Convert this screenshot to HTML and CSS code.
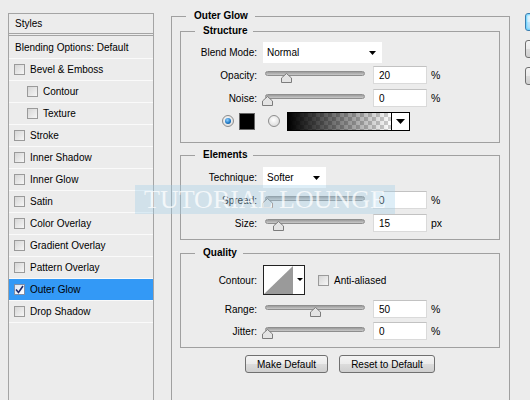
FILE: index.html
```html
<!DOCTYPE html>
<html>
<head>
  <title>Layer Style - Outer Glow</title>
  <link rel="stylesheet" href="styles.css">
</head>
<body>
  <div class="dialog">
    <!-- left: list of layer styles -->
    <div class="styles-list">
      <div class="list-head">Styles</div>
      <div class="list-row plain">Blending Options: Default</div>
      <div class="list-row"><span class="check"></span>Bevel &amp; Emboss</div>
      <div class="list-row sub"><span class="check"></span>Contour</div>
      <div class="list-row sub"><span class="check"></span>Texture</div>
      <div class="list-row"><span class="check"></span>Stroke</div>
      <div class="list-row"><span class="check"></span>Inner Shadow</div>
      <div class="list-row"><span class="check"></span>Inner Glow</div>
      <div class="list-row"><span class="check"></span>Satin</div>
      <div class="list-row"><span class="check"></span>Color Overlay</div>
      <div class="list-row"><span class="check"></span>Gradient Overlay</div>
      <div class="list-row"><span class="check"></span>Pattern Overlay</div>
      <div class="list-row selected">
        <span class="check">
          <svg width="9" height="9" viewBox="0 0 9 9"><path d="M1 4.5 L3.5 7.5 L8 1" fill="none" stroke="#1d2a6b" stroke-width="1.6"/></svg>
        </span>Outer Glow
      </div>
      <div class="list-row"><span class="check"></span>Drop Shadow</div>
    </div>

    <!-- middle: outer glow settings -->
    <fieldset class="group outer">
      <legend>Outer Glow</legend>

      <fieldset class="group inner structure">
        <legend>Structure</legend>
        <div class="row">
          <span class="lbl">Blend Mode:</span>
          <div class="select blend">Normal
            <svg class="arrow" width="7" height="4" viewBox="0 0 7 4"><path d="M0 0 H7 L3.5 4 Z"/></svg>
          </div>
        </div>
        <div class="row">
          <span class="lbl">Opacity:</span>
          <div class="slider"><div class="track"></div>
            <svg class="thumb" style="left:18px" width="11" height="10" viewBox="0 0 11 10"><path d="M5.5 0.5 L10.5 5 V9.5 H0.5 V5 Z"/></svg>
          </div>
          <div class="num">20</div><span class="unit">%</span>
        </div>
        <div class="row">
          <span class="lbl">Noise:</span>
          <div class="slider"><div class="track"></div>
            <svg class="thumb" style="left:-1px" width="11" height="10" viewBox="0 0 11 10"><path d="M5.5 0.5 L10.5 5 V9.5 H0.5 V5 Z"/></svg>
          </div>
          <div class="num">0</div><span class="unit">%</span>
        </div>
        <div class="row colors">
          <span class="radio on"></span>
          <span class="swatch"></span>
          <span class="radio"></span>
          <div class="gradient">
            <span class="ramp"></span>
            <span class="drop">
              <svg width="9" height="5" viewBox="0 0 9 5"><path d="M0 0 H9 L4.5 5 Z"/></svg>
            </span>
          </div>
        </div>
      </fieldset>

      <fieldset class="group inner elements">
        <legend>Elements</legend>
        <div class="row">
          <span class="lbl">Technique:</span>
          <div class="select technique">Softer
            <svg class="arrow" width="7" height="4" viewBox="0 0 7 4"><path d="M0 0 H7 L3.5 4 Z"/></svg>
          </div>
        </div>
        <div class="row">
          <span class="lbl">Spread:</span>
          <div class="slider"><div class="track"></div>
            <svg class="thumb" style="left:-1px" width="11" height="10" viewBox="0 0 11 10"><path d="M5.5 0.5 L10.5 5 V9.5 H0.5 V5 Z"/></svg>
          </div>
          <div class="num">0</div><span class="unit">%</span>
        </div>
        <div class="row">
          <span class="lbl">Size:</span>
          <div class="slider"><div class="track"></div>
            <svg class="thumb" style="left:10px" width="11" height="10" viewBox="0 0 11 10"><path d="M5.5 0.5 L10.5 5 V9.5 H0.5 V5 Z"/></svg>
          </div>
          <div class="num">15</div><span class="unit">px</span>
        </div>
      </fieldset>

      <fieldset class="group inner quality">
        <legend>Quality</legend>
        <div class="row contour-row">
          <span class="lbl">Contour:</span>
          <div class="contour">
            <svg width="42" height="30" viewBox="0 0 42 30">
              <path d="M1 29 L30 1 V29 Z" fill="#9a9a9a"/>
              <path d="M34 13 H40 L37 16 Z" fill="#000"/>
            </svg>
          </div>
          <span class="check aa"></span><span>Anti-aliased</span>
        </div>
        <div class="row range-row">
          <span class="lbl">Range:</span>
          <div class="slider"><div class="track"></div>
            <svg class="thumb" style="left:47px" width="11" height="10" viewBox="0 0 11 10"><path d="M5.5 0.5 L10.5 5 V9.5 H0.5 V5 Z"/></svg>
          </div>
          <div class="num">50</div><span class="unit">%</span>
        </div>
        <div class="row">
          <span class="lbl">Jitter:</span>
          <div class="slider"><div class="track"></div>
            <svg class="thumb" style="left:-1px" width="11" height="10" viewBox="0 0 11 10"><path d="M5.5 0.5 L10.5 5 V9.5 H0.5 V5 Z"/></svg>
          </div>
          <div class="num">0</div><span class="unit">%</span>
        </div>
      </fieldset>

      <div class="actions">
        <button class="btn make">Make Default</button>
        <button class="btn reset">Reset to Default</button>
      </div>
    </fieldset>

    <!-- right: dialog buttons, only their left edge is inside the window -->
    <div class="side-buttons">
      <button class="btn side focus" aria-label="OK"></button>
      <button class="btn side" aria-label="Cancel"></button>
      <button class="btn side" aria-label="New Style"></button>
    </div>
  </div>

  <div class="watermark">TUTORIAL LOUNGE</div>
</body>
</html>
```

FILE: styles.css
```css
body { margin: 0; height: 400px; overflow: hidden; background: #ececec; font-family: "Liberation Sans", Arial, sans-serif; font-size: 10px; color: #000; position: relative; }
.dialog { display: flex; align-items: flex-start; padding-left: 8px; }
.dialog > * { flex-shrink: 0; }

/* styles list */
.styles-list { width: 146px; height: 400px; margin-top: 13px; box-sizing: border-box; border: 1px solid #a4a4a4; border-bottom: none; }
.list-head { height: 19px; line-height: 20px; padding-left: 6px; border-bottom: 3px double #a4a4a4; }
.list-row { display: flex; align-items: center; height: 21px; padding-left: 5px; border-bottom: 1px solid #fafafa; white-space: nowrap; }
.list-row.plain { height: 22px; padding-left: 6px; }
.list-row.sub { padding-left: 18px; }
.list-row.selected { background: #3399f6; }
.check { display: inline-flex; align-items: center; justify-content: center; width: 11px; height: 11px; box-sizing: border-box; margin-right: 5px; border: 1px solid #9a9a9a; background: linear-gradient(135deg, #d6d6d6, #f6f6f6); }
.selected .check { background: linear-gradient(135deg, #dfe6f2, #ffffff); border-color: #7f8ea8; }

/* group boxes */
.group { margin: 0; min-width: 0; border: 1px solid #a0a0a0; }
.group legend { font-weight: bold; line-height: 12px; padding: 0 6px 0 8px; }
.outer { width: 339px; box-sizing: border-box; margin: 10px 0 0 17px; padding: 0 9px 40px 8px; }
.outer > legend { margin-left: 6px; padding-right: 7px; }
.inner { padding: 0; }
.inner > legend { margin-left: 14px; }
.structure { margin-top: 3px; padding: 4px 0 10px; }
.elements { margin-top: 6px; padding: 5px 0 5px; }
.quality { margin-top: 7px; padding: 6px 0 5px; }
.structure .row + .row, .elements .row + .row { margin-top: 1px; }

.row { display: flex; align-items: center; height: 22px; }
.lbl { width: 76px; margin-right: 6px; text-align: right; }

.select { position: relative; height: 21px; line-height: 21px; box-sizing: border-box; padding-left: 4px; background: #fff; }
.select .arrow { position: absolute; right: 6px; top: 9px; }
.blend { width: 119px; }
.technique { width: 63px; }

.slider { position: relative; width: 105px; height: 22px; margin-right: 5px; }
.track { width: 100px; height: 5px; margin: 7px 0 0 2px; box-sizing: border-box; border-radius: 3px; border: 1px solid #8e8e8e; background: linear-gradient(#9b9b9b, #c9c9c9); }
.thumb { position: absolute; top: 9px; }
.thumb path { fill: #e4e4e4; stroke: #7c7c7c; }

.num { width: 54px; height: 18px; line-height: 17px; box-sizing: border-box; padding-left: 5px; margin-right: 4px; background: #fff; border: 1px solid #dadada; border-top-color: #c2c2c2; }
.unit { font-size: 10.5px; }

.colors { padding-left: 41px; height: 22px; margin-top: 2px; }
.radio { position: relative; width: 12px; height: 12px; box-sizing: border-box; border-radius: 50%; border: 1px solid #8c8c8c; background: radial-gradient(circle at 45% 40%, #ffffff, #d2d2d2); }
.radio.on::after { content: ""; position: absolute; left: 2px; top: 2px; width: 6px; height: 6px; border-radius: 50%; background: radial-gradient(circle at 40% 35%, #8fd0ff, #1a74c2 60%, #0c3f72); }
.swatch { width: 16px; height: 17px; margin: 0 13px 0 5px; background: #000; border: 1px solid #666; box-sizing: border-box; }
.radio + .gradient { margin-left: 7px; }
.gradient { display: flex; width: 123px; height: 19px; box-sizing: border-box; border: 1px solid #000; }
.ramp { flex: 1; background: linear-gradient(to right, #000, rgba(0,0,0,0)), conic-gradient(#fff 25%, #cfcfcf 0 50%, #fff 0 75%, #cfcfcf 0) 0 0 / 8px 8px; }
.drop { display: flex; align-items: center; justify-content: center; width: 17px; border-left: 1px solid #000; background: #fff; }

.contour-row { height: 30px; }
.contour { width: 42px; height: 30px; box-sizing: border-box; border: 1px solid #222; background: #fff; margin-right: 13px; }
.contour svg { display: block; margin: -1px; }
.check.aa { margin-right: 5px; }
.range-row { margin-top: 3px; }

/* buttons */
.actions { display: flex; justify-content: center; gap: 11px; margin-top: 7px; }
.btn { height: 18px; padding: 0; font-family: inherit; font-size: 10px; color: #000; border: 1px solid #707070; border-radius: 3px; background: linear-gradient(#f4f4f4 0%, #ebebeb 50%, #dcdcdc 51%, #cfcfcf 100%); }
.make { width: 83px; }
.reset { width: 96px; }

.side-buttons { display: flex; flex-direction: column; gap: 9px; margin: 13px 0 0 15px; }
.side { width: 80px; }
.side.focus { border-color: #3c7fb1; box-shadow: 0 0 2px 1px #5fd0ff inset; background: linear-gradient(#eaf6fd 0%, #d9f0fc 50%, #bee6fd 51%, #a7d9f5 100%); }

/* overlay */
.watermark { position: absolute; left: 135px; top: 185px; width: 260px; height: 29px; line-height: 30px; text-align: center; background: rgba(160, 206, 232, 0.35); color: rgba(255, 255, 255, 0.75); font-family: "Liberation Serif", "Times New Roman", serif; font-size: 26px; }
```
